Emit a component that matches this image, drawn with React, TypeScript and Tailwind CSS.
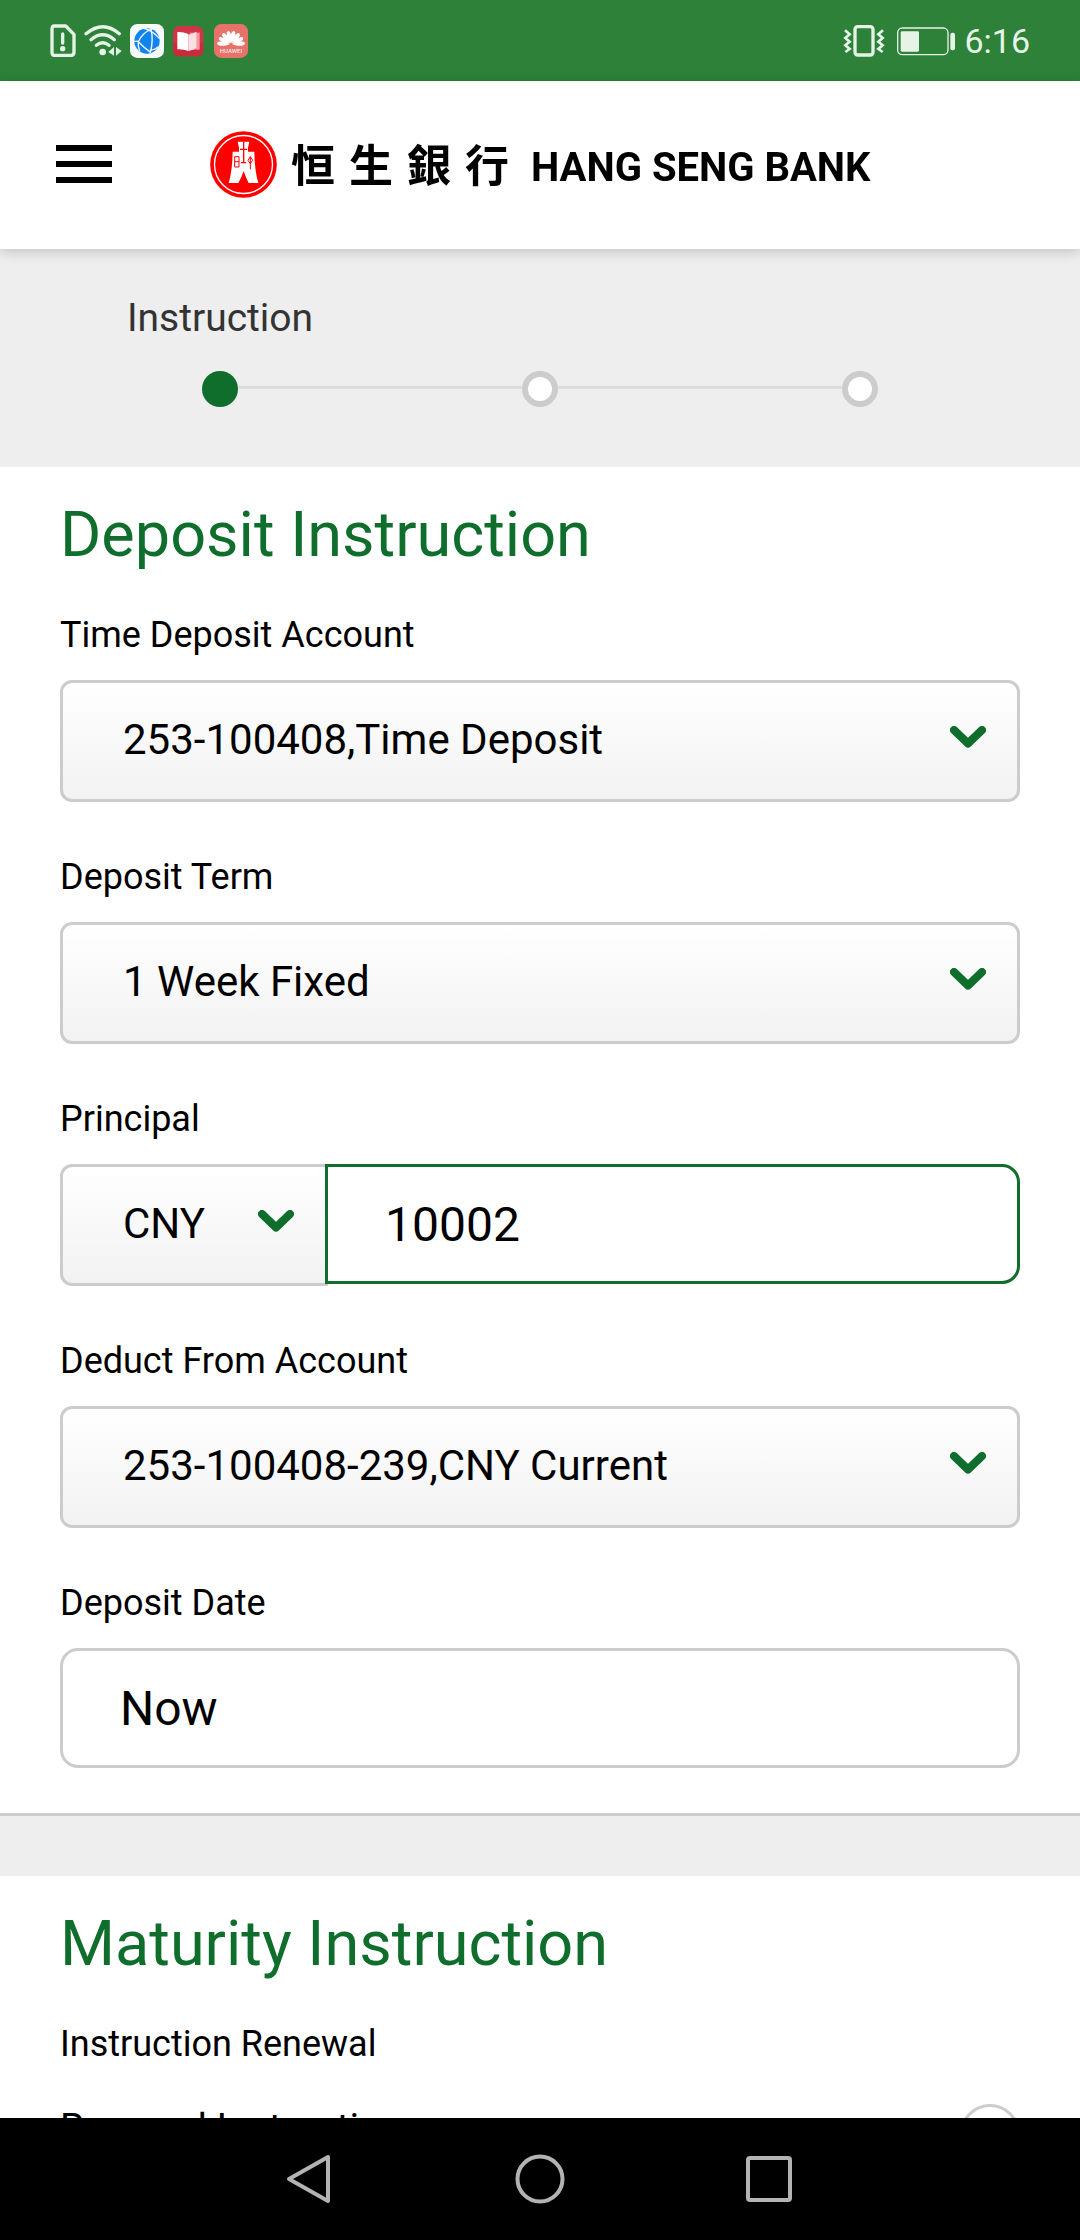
import React, { useState } from "react";

const FONT = "font-[Roboto,'Liberation_Sans',sans-serif]";

function StatusBar() {
  const petals = [-84, -60, -36, -12, 12, 36, 60, 84];
  return (
    <div className="flex h-[81px] shrink-0 items-center justify-between bg-[#2d8138] pr-[50px] pl-[50px] text-[#e6f4e8]">
      <div className="flex items-center gap-2">
        <svg className="h-[34px] w-[26px]" viewBox="150 71 78 102" fill="none" aria-label="SIM alert">
          <path d="M163 77h34l25 25v54q0 9-9 9h-50q-7 0-7-9V86q0-9 7-9z" stroke="currentColor" strokeWidth="10" strokeLinejoin="round" />
          <path d="M188 101v27" stroke="currentColor" strokeWidth="10" strokeLinecap="round" />
          <circle cx="188" cy="145" r="8" fill="currentColor" />
        </svg>
        <svg className="h-[34px] w-[38px]" viewBox="252 71 114 102" fill="none" aria-label="Wi-Fi">
          <g stroke="currentColor" strokeWidth="10" strokeLinecap="round">
            <path d="M258 100q51-42 100 0" />
            <path d="M273 118q35-29 70 0" />
            <path d="M289 135q19-16 38 0" />
          </g>
          <circle cx="308" cy="155" r="10" fill="currentColor" />
          <path d="M342 140v26l-17-11zM348 140v26l17-14z" fill="currentColor" />
        </svg>
        <svg className="h-[34px] w-[34px]" viewBox="387 72 102 102" fill="none" aria-label="Browser">
          <rect x="387" y="72" width="102" height="102" rx="22" fill="#f6fafb" />
          <circle cx="438" cy="123" r="38" fill="#0f84ee" />
          <g stroke="#f6fafb" strokeWidth="4">
            <path d="M412 125Q424 98 454 86" />
            <path d="M412 125Q430 144 449 157" />
            <path d="M450 89Q458 120 448 158" />
            <path d="M399 124h14" />
            <path d="M424 84Q448 86 476 116" />
            <path d="M412 125q-2 14 4 28" />
            <path d="M449 150q14 0 22-10" />
          </g>
        </svg>
        <svg className="h-[34px] w-[34px]" viewBox="515 72 102 102" fill="none" aria-label="Reader">
          <rect x="518" y="78" width="91" height="91" rx="20" fill="#d23447" />
          <path d="M518 130h91v19q0 20-20 20h-51q-20 0-20-20z" fill="#c92b3b" />
          <path d="M568 98h30v51h-30z" fill="#f19aa4" />
          <path d="M564 104q16-3 24-9v49q-8 6-24 9z" fill="#fbdfe2" />
          <path d="M531 96q18-1 33 6v51q-15-6-33-5z" fill="#fff" />
        </svg>
        <svg className="h-[34px] w-[34px]" viewBox="639 72 102 102" aria-label="Huawei">
          <rect x="639" y="72" width="102" height="102" rx="22" fill="#e5736a" />
          {petals.map((angle) => (
            <path
              key={angle}
              d="M690 130c-6-14-8-24-5-34q5-8 10 0c3 10 1 20-5 34z"
              fill="#fff"
              transform={`rotate(${angle} 690 134)`}
            />
          ))}
          <text x="690" y="160" textAnchor="middle" fontSize="18" fontWeight="500" fill="#fbe3e1">
            HUAWEI
          </text>
        </svg>
      </div>
      <div className="flex items-center">
        <svg className="mr-3 h-[34px] w-[42px]" viewBox="128 69 126 102" fill="none" stroke="currentColor" aria-label="Vibrate">
          <rect x="164" y="77" width="54" height="85" rx="8" strokeWidth="10" />
          <path d="M134 88l14 12-13 11 13 11-13 11 13 11-13 9" strokeWidth="8" />
          <path d="M248 88l-14 12 13 11-13 11 13 11-13 11 13 9" strokeWidth="8" />
        </svg>
        <svg className="mr-2 h-[34px] w-[59px]" viewBox="294 69 177 102" fill="none" aria-label="Battery">
          <rect x="296" y="81" width="151" height="80" rx="14" stroke="currentColor" strokeWidth="4" />
          <rect x="305" y="91" width="55" height="61" rx="4" fill="currentColor" />
          <rect x="454" y="95" width="14" height="53" rx="6" fill="currentColor" />
        </svg>
        <span className="text-[34px] leading-10">6:16</span>
      </div>
    </div>
  );
}

function Logo() {
  return (
    <a href="#" className="flex items-center">
      <svg className="h-[67px] w-[67px]" viewBox="30 35 201 201" fill="none" aria-hidden="true">
        <circle cx="130.500" cy="135.500" r="100" fill="#fe0000" />
        <circle cx="130.500" cy="135.500" r="87" stroke="#fff" strokeWidth="4" />
        <path
          d="M113 67h35l-4 18v12h19q1 58 12 94h-29q-9-17-15-36-6 19-16 36H86q11-36 12-94h19V85z"
          fill="#fff"
        />
        <g stroke="#fe0000" strokeWidth="4">
          <path d="M131 67v64M120 90h22M123 130h15" />
          <path d="M104 112h13v31h-13zM104 127h13" strokeWidth="3" />
          <path d="M151 112l7 11-7 10-7-10zM151 112v38" strokeWidth="3" />
        </g>
      </svg>
      <span
        lang="zh-Hant"
        className="ml-3.5 flex gap-3.5 pb-1 font-['Noto_Sans_CJK_TC',sans-serif] text-[44px] leading-[60px] font-bold"
      >
        <span>恒</span>
        <span>生</span>
        <span>銀</span>
        <span>行</span>
      </span>
      <span className="ml-[22px] pt-1.5 text-[40px] leading-[60px] font-bold whitespace-nowrap">HANG SENG BANK</span>
    </a>
  );
}

function Header() {
  return (
    <header className="relative z-10 flex h-[168px] shrink-0 items-start bg-white pt-[50px] pl-14 shadow-[0_3px_12px_rgba(0,0,0,0.18)]">
      <button type="button" aria-label="Menu" className="mt-3.5 flex w-14 flex-col gap-2.5">
        <span className="h-1.5 w-full bg-black" />
        <span className="h-1.5 w-full bg-black" />
        <span className="h-1.5 w-full bg-black" />
      </button>
      <div className="ml-[98px]">
        <Logo />
      </div>
    </header>
  );
}

function Stepper() {
  const steps = ["Instruction", "", ""];
  return (
    <ol className="grid grid-cols-3 bg-[#eeeeee] px-[60px] pt-[46px] pb-[60px]">
      {steps.map((label, i) => (
        <li key={i} aria-current={i === 0 ? "step" : undefined}>
          <div className="h-[46px] text-center text-[39px] leading-[46px] text-[#333333]">{label}</div>
          <div className="mt-[30px] flex items-center">
            <span className={i === 0 ? "mb-[3px] h-[3px] flex-1" : "mb-[3px] h-[3px] flex-1 bg-[#dddddd]"} />
            <span
              className={
                i === 0
                  ? "size-9 rounded-full bg-[#0f6e2c]"
                  : "size-9 rounded-full border-6 border-[#cccccc] bg-white"
              }
            />
            <span className={i === 2 ? "mb-[3px] h-[3px] flex-1" : "mb-[3px] h-[3px] flex-1 bg-[#dddddd]"} />
          </div>
        </li>
      ))}
    </ol>
  );
}

function Select({ id, value, joined = false }: { id: string; value: string; joined?: boolean }) {
  return (
    <div className={joined ? "relative w-[268px] shrink-0" : "relative"}>
      <select
        id={id}
        aria-label={joined ? "Currency" : undefined}
        defaultValue={value}
        className={
          joined
            ? "block h-[122px] w-full appearance-none rounded-l-xl border-3 border-[#cccccc] bg-linear-to-b from-white to-[#f2f2f2] pr-20 pb-1 pl-[60px] text-[42px] text-black outline-none"
            : "block h-[122px] w-full appearance-none rounded-xl border-3 border-[#cccccc] bg-linear-to-b from-white to-[#f2f2f2] pr-20 pb-1 pl-[60px] text-[42px] text-black outline-none"
        }
      >
        <option>{value}</option>
      </select>
      <svg
        className="pointer-events-none absolute top-[46px] right-[34px] h-[22px] w-9"
        viewBox="0 0 36 22"
        fill="none"
        aria-hidden="true"
      >
        <path d="M4 4l14 13.500L32 4" stroke="#0f6e2c" strokeWidth="8" strokeLinecap="round" strokeLinejoin="round" />
      </svg>
    </div>
  );
}

function Field({ id, label, children }: { id: string; label: string; children: React.ReactNode }) {
  return (
    <div>
      <label htmlFor={id} className="mb-[23px] block text-[36px] leading-[44px] text-black">
        {label}
      </label>
      {children}
    </div>
  );
}

function SectionTitle({ children }: { children: React.ReactNode }) {
  return <h2 className="text-[63px] leading-[72px] text-[#0f6e2c]">{children}</h2>;
}

function NavBar() {
  return (
    <nav className="flex h-[122px] shrink-0 items-start justify-center gap-[180px] bg-black pt-9 text-[#b3b3b3]">
      <button type="button" aria-label="Back">
        <svg className="size-[50px]" viewBox="0 0 50 50" fill="none" stroke="currentColor" strokeWidth="4" strokeLinejoin="round">
          <path d="M43 3v44L4 25z" />
        </svg>
      </button>
      <button type="button" aria-label="Home">
        <svg className="size-[50px]" viewBox="0 0 50 50" fill="none" stroke="currentColor" strokeWidth="4">
          <circle cx="25" cy="25" r="22.500" />
        </svg>
      </button>
      <button type="button" aria-label="Recent apps">
        <svg className="size-[50px]" viewBox="0 0 50 50" fill="none" stroke="currentColor" strokeWidth="4">
          <rect x="3" y="4" width="42" height="42" rx="2" />
        </svg>
      </button>
    </nav>
  );
}

export default function App() {
  const [principal, setPrincipal] = useState("10002");
  const [date, setDate] = useState("Now");

  return (
    <div className={`flex h-screen flex-col bg-white text-black ${FONT}`}>
      <StatusBar />
      <Header />
      <main className="min-h-0 flex-1 overflow-y-auto [scrollbar-width:none]">
        <Stepper />
        <section className="border-b-3 border-[#cccccc] bg-white px-[60px] pt-8 pb-[45px]">
          <SectionTitle>Deposit Instruction</SectionTitle>
          <div className="mt-[42px] flex flex-col gap-[53px]">
            <Field id="account" label="Time Deposit Account">
              <Select id="account" value="253-100408,Time Deposit" />
            </Field>
            <Field id="term" label="Deposit Term">
              <Select id="term" value="1 Week Fixed" />
            </Field>
            <Field id="principal" label="Principal">
              <div className="flex items-start">
                <Select id="currency" value="CNY" joined />
                <input
                  id="principal"
                  value={principal}
                  onChange={(e) => setPrincipal(e.target.value)}
                  className="relative -ml-[3px] block h-[120px] min-w-0 flex-1 rounded-r-[18px] border-3 border-[#0f6e2c] bg-white px-[57px] text-[48px] text-black outline-none"
                />
              </div>
            </Field>
            <Field id="deduct" label="Deduct From Account">
              <Select id="deduct" value="253-100408-239,CNY Current" />
            </Field>
            <Field id="date" label="Deposit Date">
              <input
                id="date"
                value={date}
                onChange={(e) => setDate(e.target.value)}
                className="block h-[120px] w-full rounded-[18px] border-3 border-[#cccccc] bg-white px-[57px] text-[48px] text-black outline-none"
              />
            </Field>
          </div>
        </section>
        <div className="h-[60px] bg-[#eeeeee]" />
        <section className="bg-white px-[60px] pt-8 pb-12">
          <SectionTitle>Maturity Instruction</SectionTitle>
          <p className="mt-[42px] text-[36px] leading-[44px]">Instruction Renewal</p>
          <div className="mt-[38px] flex items-start justify-between">
            <label htmlFor="renewal" className="text-[39px] leading-12">
              Renewal Instruction
            </label>
            <input
              id="renewal"
              type="radio"
              name="renewal"
              className="size-[60px] appearance-none rounded-full border-3 border-[#cccccc] bg-white checked:border-[#0f6e2c] checked:bg-[#0f6e2c]"
            />
          </div>
        </section>
      </main>
      <NavBar />
    </div>
  );
}
